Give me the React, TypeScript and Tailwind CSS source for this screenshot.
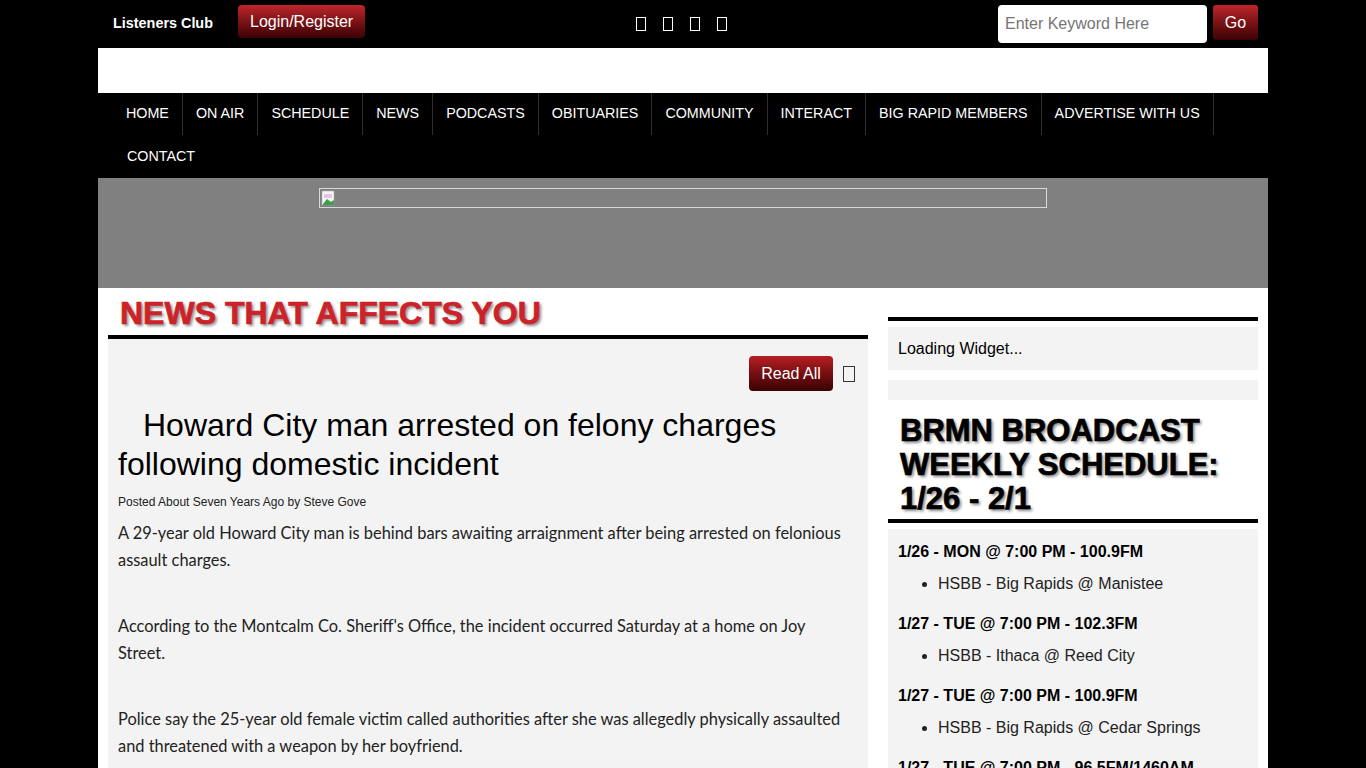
import React from "react";

const navRow1 = [
  "HOME",
  "ON AIR",
  "SCHEDULE",
  "NEWS",
  "PODCASTS",
  "OBITUARIES",
  "COMMUNITY",
  "INTERACT",
  "BIG RAPID MEMBERS",
  "ADVERTISE WITH US",
];

const schedule = [
  { h: "1/26 - MON @ 7:00 PM - 100.9FM", i: "HSBB - Big Rapids @ Manistee" },
  { h: "1/27 - TUE @ 7:00 PM - 102.3FM", i: "HSBB - Ithaca @ Reed City" },
  { h: "1/27 - TUE @ 7:00 PM - 100.9FM", i: "HSBB - Big Rapids @ Cedar Springs" },
  { h: "1/27 - TUE @ 7:00 PM - 96.5FM/1460AM", i: "HSBB - Chippewa Hills @ Morley Stanwood" },
];

function Tofu({ className = "" }: { className?: string }) {
  return <span className={"inline-block w-[10px] h-[14px] border border-current " + className} />;
}

export default function App() {
  return (
    <div className="min-h-[768px] bg-black font-['Liberation_Sans',Arial,sans-serif] text-black">
      {/* top bar */}
      <div className="mx-auto w-[1170px] h-[48px] flex items-center">
        <div className="w-[1170px] flex items-center">
          <div className="pl-[15px] text-[14.4px] font-bold text-white w-[140px] mt-[-1px]">Listeners Club</div>
          <button className="h-[33px] mt-[-5px] px-[12px] rounded-[4px] text-white text-[16px] bg-gradient-to-b from-[#c0262b] to-[#3d0305]">
            Login/Register
          </button>
          <div className="flex-1 flex justify-center gap-[17px] text-white pr-[0px]">
            <Tofu />
            <Tofu />
            <Tofu />
            <Tofu />
          </div>
          <div className="flex items-center pr-[10px]">
            <div className="w-[209px] h-[38px] bg-white rounded-[4px] flex items-center pl-[7px] text-[16px] text-[#757575]">
              Enter Keyword Here
            </div>
            <button className="ml-[6px] w-[45px] h-[35px] mt-[-3px] rounded-[3px] text-white text-[16px] bg-gradient-to-b from-[#c0262b] to-[#3d0305]">
              Go
            </button>
          </div>
        </div>
      </div>

      <div className="mx-auto w-[1170px]">
        {/* white band */}
        <div className="h-[45px] bg-white" />

        {/* nav */}
        <nav className="bg-black pl-[15px] text-white text-[14.3px] whitespace-nowrap">
          <div className="flex h-[43px]">
            {navRow1.map((n) => (
              <div key={n} className="px-[13px] flex items-center border-r border-[#2e2e2e] h-[42px]">
                {n}
              </div>
            ))}
          </div>
          <div className="flex h-[42px]">
            <div className="px-[14px] flex items-center">CONTACT</div>
          </div>
        </nav>

        {/* banner */}
        <div className="h-[110px] bg-[#808080] pt-[10px]">
          <div className="ml-[221px] w-[728px] h-[20px] border border-[#d8d8d8] flex items-center">
            <svg width="16" height="16" viewBox="0 0 16 16" className="ml-[1px]">
              <rect x="1" y="1" width="12" height="14" fill="#f4f4f4" stroke="#aaa" strokeWidth="0.5" />
              <rect x="3" y="4" width="8" height="4" fill="#e6c3e6" />
              <path d="M2 14 L6 9 L10 12 L13 10 L13 15 L2 15 Z" fill="#3aa14a" />
            </svg>
          </div>
        </div>

        {/* main */}
        <div className="bg-white flex gap-[20px] px-[10px] pb-[40px]">
          {/* left column */}
          <div className="w-[760px]">
            <div className="flex items-center pl-[12px] border-b-[4px] border-black h-[51px]">
              <h1 className="text-[32px] font-black text-[#cc2229] [text-shadow:2px_2px_3px_#888] [-webkit-text-stroke:0.7px_#cc2229] leading-none mt-[2px]">
                NEWS THAT AFFECTS YOU
              </h1>
            </div>
            <div className="bg-[#f3f3f3] px-[10px] pt-[17px] pb-[30px]">
              <div className="flex justify-end items-center gap-[10px] pr-[3px]">
                <button className="w-[84px] h-[35px] rounded-[4px] text-white text-[16px] bg-gradient-to-b from-[#b81e22] to-[#3a0304]">
                  Read All
                </button>
                <span className="inline-block w-[12px] h-[16px] border border-[#333]" />
              </div>
              <h2 className="mt-[15px] text-[32px] leading-[39px] font-normal">
                <span className="inline-block w-[25px]" />
                Howard City man arrested on felony charges following domestic incident
              </h2>
              <div className="mt-[9px] text-[12px] text-[#222]">Posted About Seven Years Ago by Steve Gove</div>
              <div className="mt-[8px] font-['Lato',sans-serif] text-[16.4px] leading-[27px] text-[#222] flex flex-col gap-[39px]">
                <p>
                  A 29-year old Howard City man is behind bars awaiting arraignment after being arrested on felonious
                  <br />
                  assault charges.
                </p>
                <p>
                  According to the Montcalm Co. Sheriff's Office, the incident occurred Saturday at a home on Joy
                  <br />
                  Street.
                </p>
                <p>
                  Police say the 25-year old female victim called authorities after she was allegedly physically assaulted
                  <br />
                  and threatened with a weapon by her boyfriend.
                </p>
              </div>
            </div>
          </div>

          {/* right column */}
          <div className="w-[370px] pt-[29px]">
            <div className="h-[4px] bg-black" />
            <div className="mt-[6px] h-[43px] bg-[#f3f3f3] flex items-center pl-[10px] text-[16px]">Loading Widget...</div>
            <div className="mt-[10px] h-[20px] bg-[#f3f3f3]" />
            <div className="pl-[12px] pt-[14px] pb-[3px] border-b-[4px] border-black">
              <h3 className="text-[31px] leading-[34px] font-black [text-shadow:2px_2px_3px_#888] [-webkit-text-stroke:0.7px_#000]">
                BRMN BROADCAST WEEKLY SCHEDULE: 1/26 - 2/1
              </h3>
            </div>
            <div className="mt-[6px] bg-[#f3f3f3] px-[10px] pt-[11px] pb-[20px]">
              {schedule.map((s, idx) => (
                <div key={idx} className={idx === 0 ? "mb-[20px] mt-[2px]" : "mb-[20px]"}>
                  <div className="text-[16px] font-bold leading-[20px]">{s.h}</div>
                  <ul className="list-disc pl-[40px] mt-[12px] text-[16px] leading-[20px] text-[#222]">
                    <li>{s.i}</li>
                  </ul>
                </div>
              ))}
            </div>
          </div>
        </div>
      </div>
    </div>
  );
}
